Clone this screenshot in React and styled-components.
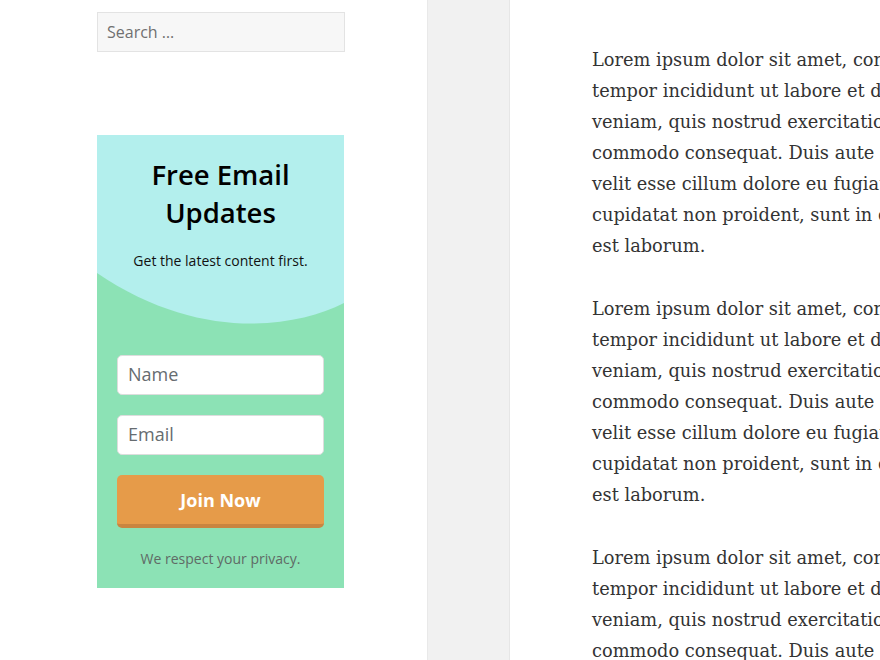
import React from 'react'
import styled, { createGlobalStyle } from 'styled-components'

const GlobalStyle = createGlobalStyle`
    html, body {
        margin: 0;
        padding: 0;
        background: #fff;
        overflow: hidden;
    }
    * {
        box-sizing: border-box;
    }
`

const Page = styled.div`
    display: flex;
    width: 880px;
    height: 660px;
    overflow: hidden;
`

const Sidebar = styled.aside`
    width: 427px;
    flex-shrink: 0;
    padding: 12px 0 0 97px;
    background: #fff;
`

const SearchField = styled.input`
    display: block;
    width: 248px;
    height: 40px;
    padding: 0 9px;
    background: #f7f7f7;
    border: 1px solid #e3e3e3;
    border-radius: 0;
    font-family: "Open Sans", sans-serif;
    font-size: 16px;
    color: #333;
    outline: none;

    &::placeholder {
        color: #707070;
    }
`

const Widget = styled.section`
    width: 247px;
    margin-top: 83px;
    background: #8ce2b5;
    font-family: "Open Sans", sans-serif;
`

const Header = styled.div`
    background: #b3efed;
    padding: 21px 16px 2px;
    text-align: center;
`

const Title = styled.h2`
    margin: 0;
    font-size: 27.5px;
    line-height: 38px;
    font-weight: 600;
    color: #000;
`

const Subtitle = styled.p`
    margin: 19px 0 0;
    font-size: 14px;
    line-height: 20px;
    color: #111;
`

const Wave = styled.svg`
    display: block;
    width: 247px;
    height: 52px;
`

const Form = styled.form`
    display: flex;
    flex-direction: column;
    gap: 20px;
    padding: 30px 20px 0;
`

const Field = styled.input`
    display: block;
    width: 100%;
    height: 40px;
    padding: 0 10px 2px;
    background: #fff;
    border: 1px solid #ddd;
    border-radius: 5px;
    font-family: "Open Sans", sans-serif;
    font-size: 18px;
    color: #333;
    outline: none;

    &::placeholder {
        color: #666c70;
    }
`

const JoinButton = styled.button`
    display: block;
    width: 100%;
    height: 53px;
    padding: 0;
    background: #e69b49;
    border: none;
    border-bottom: 4px solid #c98540;
    border-radius: 5px;
    font-family: "Open Sans", sans-serif;
    font-size: 18px;
    font-weight: 700;
    color: #fff;
    cursor: pointer;
`

const Privacy = styled.p`
    margin: 0;
    padding: 21px 0 19px;
    text-align: center;
    font-size: 14px;
    line-height: 20px;
    color: #5f6b66;
`

const Gutter = styled.div`
    width: 83px;
    flex-shrink: 0;
    background: #f1f1f1;
    border-left: 1px solid #e9e9e9;
    border-right: 1px solid #e6e6e6;
`

const Content = styled.main`
    flex: 1;
    padding: 44px 0 0 82px;
    font-family: "DejaVu Serif", serif;
    font-size: 17.8px;
    line-height: 31px;
    color: #333;
    overflow: hidden;
`

const Paragraph = styled.p`
    margin: 0 0 32px;
`

const Line = styled.span`
    display: block;
    white-space: nowrap;
`

const LOREM = [
    'Lorem ipsum dolor sit amet, consectetur adipiscing elit, sed do eiusmod',
    'tempor incididunt ut labore et dolore magna aliqua. Ut enim ad minim',
    'veniam, quis nostrud exercitation ullamco laboris nisi ut aliquip ex ea',
    'commodo consequat. Duis aute irure dolor in reprehenderit in voluptate',
    'velit esse cillum dolore eu fugiat nulla pariatur. Excepteur sint occaecat',
    'cupidatat non proident, sunt in culpa qui officia deserunt mollit anim id',
    'est laborum.'
]

const EmailWidget = () => (
    <Widget>
        <Header>
            <Title>Free Email<br />Updates</Title>
            <Subtitle>Get the latest content first.</Subtitle>
        </Header>
        <Wave viewBox="0 0 247 52" preserveAspectRatio="none">
            <path d="M0 0 L247 0 L247 30 C195 56, 100 68, 0 0 Z" fill="#b3efed" />
        </Wave>
        <Form onSubmit={e => e.preventDefault()}>
            <Field type="text" placeholder="Name" />
            <Field type="email" placeholder="Email" />
            <JoinButton type="submit">Join Now</JoinButton>
        </Form>
        <Privacy>We respect your privacy.</Privacy>
    </Widget>
)

const App = () => (
    <>
        <GlobalStyle />
        <Page>
            <Sidebar>
                <SearchField type="search" placeholder="Search …" />
                <EmailWidget />
            </Sidebar>
            <Gutter />
            <Content>
                {[0, 1, 2].map(p => (
                    <Paragraph key={p}>
                        {LOREM.map((l, i) => <Line key={i}>{l}</Line>)}
                    </Paragraph>
                ))}
            </Content>
        </Page>
    </>
)

export default App
